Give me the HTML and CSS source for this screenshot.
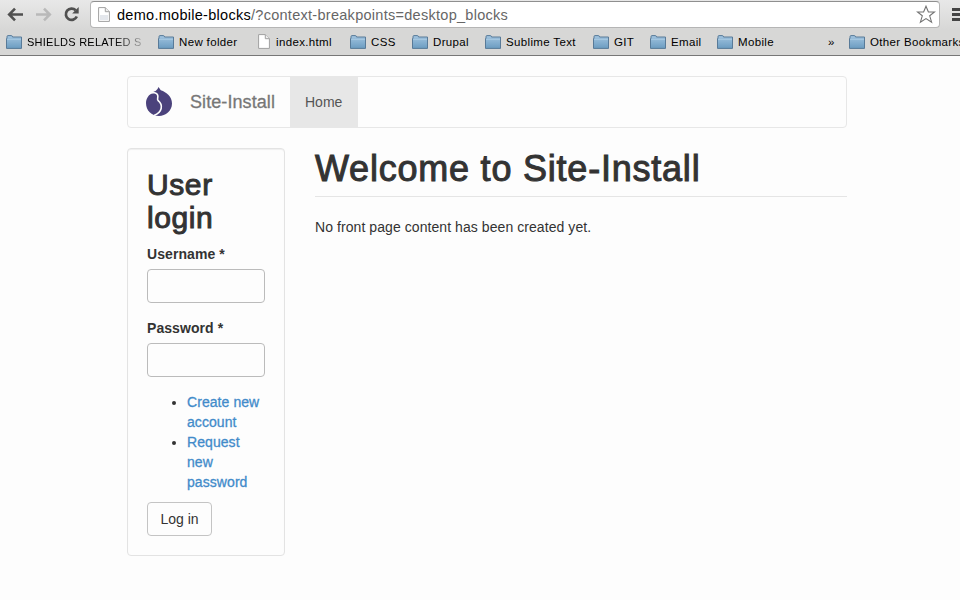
FILE: index.html
```html
<!DOCTYPE html>
<html lang="en">
<head>
<meta charset="utf-8">
<title>Welcome to Site-Install</title>
<link rel="stylesheet" href="styles.css">
</head>
<body>
<svg width="0" height="0" class="defs">
  <defs>
    <linearGradient id="blue" x1="0" y1="0" x2="0" y2="1"><stop offset="0" stop-color="#a3c5e0"/><stop offset="1" stop-color="#6b9cc1"/></linearGradient>
    <symbol id="folder" viewBox="0 0 16 14">
      <path d="M1 3.5V1.7Q1 .6 2 .6H5.5Q6.3 .6 6.5 2H15.5V13.4H.5V3.5Z" fill="url(#blue)" stroke="#587a98"/>
      <path d="M1 4.5H15" stroke="#a5c7e0"/>
    </symbol>
    <symbol id="page" viewBox="0 0 12 15">
      <path d="M.6 .6H7.3L11.4 4.7V14.4H.6Z" fill="#fff" stroke="#a0a0a0"/><path d="M7.3 .6V4.7H11.4" fill="#eee" stroke="#a0a0a0"/>
    </symbol>
  </defs>
</svg>
<header class="browser">
  <div class="toolbar">
    <svg class="nav" width="90" height="28" viewBox="0 0 90 28" fill="none">
      <path d="M23 14.5H10M15 8.7L9.2 14.5L15 20.3" stroke="#505050" stroke-width="2.6"/>
      <path d="M36 14.5H49M44 8.7L49.8 14.5L44 20.3" stroke="#b9b9b9" stroke-width="2.6"/>
      <path d="M75.7 10.3A5.7 5.7 0 1 0 76.8 16.5" stroke="#505050" stroke-width="2.7"/>
      <path d="M78.7 7V13.4H72.2Z" fill="#505050"/>
    </svg>
    <div class="address">
      <svg class="doc" width="12" height="15"><use href="#page"/><path d="M2 8H10V13H2Z" fill="#e4e7ec"/></svg>
      <span class="url"><b>demo.mobile-blocks</b>/?context-breakpoints=desktop_blocks</span>
      <svg class="star" width="20" height="19" viewBox="0 0 20 19"><path d="M10 1.2L12.4 7H18.5L13.7 10.8L15.6 17.2L10 13.6L4.4 17.2L6.3 10.8L1.5 7H7.6Z" fill="#fff" stroke="#737373" stroke-width="1.1"/></svg>
    </div>
    <svg class="menu" width="8" height="28"><path d="M0 9.5H8M0 14.5H8M0 19.5H8" stroke="#444" stroke-width="2.8"/></svg>
  </div>
  <nav class="bookmarks">
    <span class="mark fade"><svg width="16" height="14"><use href="#folder"/></svg>SHIELDS RELATED S</span>
    <span class="mark"><svg width="16" height="14"><use href="#folder"/></svg>New folder</span>
    <span class="mark file"><svg width="12" height="15"><use href="#page"/></svg>index.html</span>
    <span class="mark"><svg width="16" height="14"><use href="#folder"/></svg>CSS</span>
    <span class="mark"><svg width="16" height="14"><use href="#folder"/></svg>Drupal</span>
    <span class="mark"><svg width="16" height="14"><use href="#folder"/></svg>Sublime Text</span>
    <span class="mark"><svg width="16" height="14"><use href="#folder"/></svg>GIT</span>
    <span class="mark"><svg width="16" height="14"><use href="#folder"/></svg>Email</span>
    <span class="mark"><svg width="16" height="14"><use href="#folder"/></svg>Mobile</span>
    <span class="mark more">»</span>
    <span class="mark"><svg width="16" height="14"><use href="#folder"/></svg>Other Bookmarks</span>
  </nav>
</header>
<div class="container">
  <nav class="navbar">
    <svg class="logo" width="28" height="30" viewBox="0 0 28 30">
      <path d="M13.5 0L15.8 3.2C21.5 5.2 27 9.5 27 16.5C27 24 20.5 29 14 29C6.5 29 1 23.5 1 16C1 10.5 5.5 5.8 10.6 4Q12.7 2.6 13.5 0Z" fill="#4b427c"/>
      <path d="M4.2 6.8C7.5 4.8 12.2 5.3 12.8 8.7C13.2 11 11.7 12.1 13.2 13.7C18.3 18 17.4 25.2 9 28.4" fill="none" stroke="#fdfdfd" stroke-width="1.6"/>
    </svg>
    <span class="brand">Site-Install</span>
    <a class="home">Home</a>
  </nav>
  <div class="columns">
    <aside class="well">
      <h2>User<br>login</h2>
      <label for="user">Username *</label>
      <input id="user" type="text">
      <label for="pass">Password *</label>
      <input id="pass" type="password">
      <ul>
        <li><a>Create new account</a></li>
        <li><a>Request<br>new<br>password</a></li>
      </ul>
      <button>Log in</button>
    </aside>
    <main>
      <h1>Welcome to Site-Install</h1>
      <p>No front page content has been created yet.</p>
    </main>
  </div>
</div>
</body>
</html>
```
FILE: styles.css
```css
* { box-sizing: border-box; }
body { margin: 0; height: 600px; overflow: hidden; background: #fdfdfd; color: #333; font: 14px/20px "Liberation Sans", Arial, sans-serif; }
.defs { display: block; }
.browser { height: 56px; background: linear-gradient(#e8e8e8, #d7d7d6 30px); border-bottom: 1px solid #777; overflow: hidden; }
.toolbar { display: flex; height: 28px; }
.nav { flex: none; }
.address { display: flex; align-items: center; width: 850px; height: 27px; margin-top: 1px; border: 1px solid #b5b5b5; border-top-color: #8f8f8f; border-radius: 4px; background: #fff; padding: 0 3px 0 7px; }
.url { margin-left: 7px; color: #666; font-size: 14.5px; letter-spacing: .28px; white-space: nowrap; }
.url b { color: #000; font-weight: normal; }
.star { margin-left: auto; }
.menu { margin-left: 12px; }
.bookmarks { display: grid; grid-template-columns: 152px 100px 92px 62px 73px 108px 57px 67px 111px 21px 130px; padding-left: 6px; height: 27px; align-items: center; color: #000; font-size: 11.5px; letter-spacing: .35px; }
.mark { display: flex; align-items: center; gap: 5px; white-space: nowrap; }
.mark svg { flex: none; }
.file { gap: 6px; }
.fade { width: 136px; overflow: hidden; font-size: 11px; letter-spacing: .25px; -webkit-mask-image: linear-gradient(90deg, #000 108px, transparent 144px); mask-image: linear-gradient(90deg, #000 108px, transparent 144px); }
.container { width: 720px; margin: 20px auto 0 127px; }
.navbar { display: flex; align-items: center; height: 52px; border: 1px solid #e7e7e7; border-radius: 4px; }
.logo { margin-left: 17px; }
.brand { width: 100px; margin-left: 17px; color: #777; font-size: 18px; letter-spacing: .08px; -webkit-text-stroke: .3px #777; white-space: nowrap; }
.home { align-self: stretch; width: 68px; padding: 15px; background: #e7e7e7; color: #555; }
.columns { display: flex; gap: 30px; margin-top: 20px; }
.well { width: 158px; height: 408px; padding: 19px; border: 1px solid #e3e3e3; border-radius: 4px; box-shadow: inset 0 1px 1px rgba(0,0,0,.06); letter-spacing: .07px; }
h1, h2 { font-weight: normal; -webkit-text-stroke: 1px #333; }
h2 { margin: 0 0 10px; font-size: 30px; line-height: 33px; letter-spacing: .6px; }
label { display: block; margin-bottom: 5px; font-weight: bold; }
input { display: block; width: 118px; height: 34px; margin-bottom: 15px; border: 1px solid #bbb; border-radius: 4px; background: #fdfdfd; }
ul { margin: 0 0 10px; padding-left: 40px; }
li a { color: #428bca; -webkit-text-stroke: .3px #428bca; }
button { display: block; width: 65px; height: 34px; padding: 0; border: 1px solid #c4c4c4; border-radius: 4px; background: #fdfdfd; color: #333; font: inherit; }
main { width: 532px; }
h1 { height: 49px; margin: 0 0 20px; border-bottom: 1px solid #e5e5e5; font-size: 36px; line-height: 41px; letter-spacing: .78px; white-space: nowrap; }
p { margin: 0; letter-spacing: .07px; }
```
